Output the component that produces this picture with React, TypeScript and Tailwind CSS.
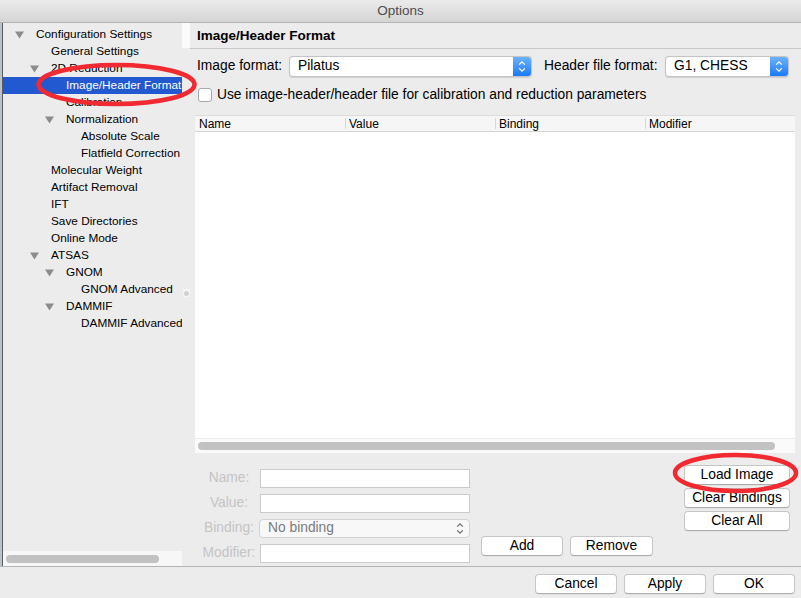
import React from 'react';

type TreeNode = { label: string; level: number; open?: boolean; selected?: boolean };

const tree: TreeNode[] = [
  { label: 'Configuration Settings', level: 0, open: true },
  { label: 'General Settings', level: 1 },
  { label: '2D Reduction', level: 1, open: true },
  { label: 'Image/Header Format', level: 2, selected: true },
  { label: 'Calibration', level: 2 },
  { label: 'Normalization', level: 2, open: true },
  { label: 'Absolute Scale', level: 3 },
  { label: 'Flatfield Correction', level: 3 },
  { label: 'Molecular Weight', level: 1 },
  { label: 'Artifact Removal', level: 1 },
  { label: 'IFT', level: 1 },
  { label: 'Save Directories', level: 1 },
  { label: 'Online Mode', level: 1 },
  { label: 'ATSAS', level: 1, open: true },
  { label: 'GNOM', level: 2, open: true },
  { label: 'GNOM Advanced', level: 3 },
  { label: 'DAMMIF', level: 2, open: true },
  { label: 'DAMMIF Advanced', level: 3 },
];

const indent = ['pl-[12px]', 'pl-[27px]', 'pl-[42px]', 'pl-[57px]'];

const Disclosure = () => (
  <svg width="9" height="8" viewBox="0 0 9 8">
    <path d="M0 0.5 L9 0.5 L4.5 7.5 Z" fill="#8c8c8c" />
  </svg>
);

const Stepper = ({ color = 'white' }: { color?: string }) => (
  <svg width="8" height="13" viewBox="0 0 8 13">
    <path d="M1.2 4.6 L4 1.8 L6.8 4.6" fill="none" stroke={color} strokeWidth="1.3" />
    <path d="M1.2 8.4 L4 11.2 L6.8 8.4" fill="none" stroke={color} strokeWidth="1.3" />
  </svg>
);

const Button = ({ children, className = '' }: { children: React.ReactNode; className?: string }) => (
  <div
    className={`flex h-[20px] items-center justify-center rounded-[4px] border border-[#c6c6c6] border-b-[#adadad] bg-white text-[13.8px] text-black shadow-[0_0.5px_0.5px_rgba(0,0,0,0.08)] ${className}`}
  >
    {children}
  </div>
);

const BlueSelect = ({ value, className }: { value: string; className: string }) => (
  <div className={`flex h-[21px] items-stretch rounded-[4px] border border-[#c4c4c4] bg-white shadow-[0_0.5px_1px_rgba(0,0,0,0.12)] ${className}`}>
    <div className="flex flex-1 items-center pl-[8px] text-black">{value}</div>
    <div className="flex w-[18px] items-center justify-center rounded-r-[3px] bg-gradient-to-b from-[#6bb2fb] to-[#1579f7]">
      <Stepper />
    </div>
  </div>
);

const columns = ['Name', 'Value', 'Binding', 'Modifier'];

export default function App() {
  return (
    <div
      className="relative h-[598px] w-[801px] overflow-hidden bg-[#ececec] text-black"
      style={{ fontFamily: '"Liberation Sans", Arial, sans-serif' }}
    >
      {/* title bar */}
      <div className="flex h-[23px] items-center justify-center border-b border-[#b3b3b3] bg-gradient-to-b from-[#ebebeb] to-[#d5d5d5] text-[13.5px] text-[#4d4d4d]">
        Options
      </div>

      <div className="flex h-[543px]">
        {/* window edge */}
        <div className="w-[2px] bg-[#b9c3cc]" />
        <div className="w-[1px] bg-[#5c5c5c]" />

        {/* tree */}
        <div className="flex w-[179px] flex-col">
          <div className="flex-1 overflow-hidden pt-[3px] text-[11.8px]">
            {tree.map((n) => (
              <div
                key={n.label}
                className={`flex h-[17px] items-center overflow-hidden whitespace-nowrap ${indent[n.level]} ${
                  n.selected ? 'bg-[#2258d0] text-white' : 'text-black'
                }`}
              >
                <div className="flex w-[21px] shrink-0 items-center">{n.open && <Disclosure />}</div>
                <span>{n.label}</span>
              </div>
            ))}
          </div>
          <div className="flex h-[15px] items-center bg-[#f7f7f7] px-[3px]">
            <div className="h-[8px] w-[153px] rounded-full bg-[#c2c2c2]" />
          </div>
        </div>

        {/* splitter gap */}
        <div className="flex w-[8px] flex-col">
          <div className="h-[25px] bg-[#fbfbfb]" />
          <div className="mt-[241px] ml-[1px] flex h-[8px] w-[7px] items-center justify-center bg-[#f6f6f6]">
            <div className="h-[5px] w-[5px] rounded-full bg-[#d2d2d2]" />
          </div>
        </div>

        {/* right pane */}
        <div className="flex flex-1 flex-col text-[13.8px]">
          <div className="flex h-[26px] items-center border-b border-[#c8c8c8] pl-[7px] pt-[2px] text-[13.5px] font-bold">
            Image/Header Format
          </div>

          <div className="mt-[7px] flex h-[21px] items-center pl-[7px]">
            <span className="w-[92px] whitespace-nowrap">Image format:</span>
            <BlueSelect value="Pilatus" className="w-[243px]" />
            <span className="ml-[12px] w-[121px] whitespace-nowrap">Header file format:</span>
            <BlueSelect value="G1, CHESS" className="w-[124px]" />
          </div>

          <div className="mt-[10px] flex h-[16px] items-center pl-[8px]">
            <div className="h-[14px] w-[14px] rounded-[3px] border border-[#a9a9a9] bg-white" />
            <span className="ml-[5px] whitespace-nowrap">Use image-header/header file for calibration and reduction parameters</span>
          </div>

          {/* table */}
          <div className="ml-[5px] mt-[12px] flex h-[338px] w-[600px] flex-col border-t border-[#dcdcdc] bg-white">
            <div className="flex h-[16px] border-b border-[#d4d4d4] bg-[#f6f6f6] text-[12px]">
              {columns.map((c, i) => (
                <div key={c} className="flex w-[150px] items-center">
                  {i > 0 && <div className="h-[11px] w-[1px] bg-[#d6d6d6]" />}
                  <span className={i > 0 ? 'ml-[3px]' : 'ml-[4px]'}>{c}</span>
                </div>
              ))}
            </div>
            <div className="flex-1" />
            <div className="flex h-[15px] items-center border-t border-[#ededed] bg-[#fafafa] px-[3px]">
              <div className="h-[8px] w-[577px] rounded-full bg-[#c2c2c2]" />
            </div>
          </div>

          {/* bottom form */}
          <div className="flex flex-1">
            <div className="ml-[10px] mt-[16px] grid grid-cols-[58px_210px] gap-x-[2px] gap-y-[3px]">
              <span className="flex h-[19px] items-center justify-center text-[#c4c4c4]">Name:</span>
              <div className="h-[19px] border border-[#cacaca] bg-white" />
              <span className="flex h-[19px] items-center justify-center text-[#c4c4c4]">Value:</span>
              <div className="h-[19px] border border-[#cacaca] bg-white" />
              <span className="flex h-[19px] items-center justify-center text-[#c4c4c4]">Binding:</span>
              <div className="-ml-[1px] flex h-[19px] items-center justify-between rounded-[4px] border border-[#d2d2d2] bg-[#f8f8f8] pl-[8px] pr-[5px] text-[#7b7b7b]">
                <span>No binding</span>
                <Stepper color="#6e6e6e" />
              </div>
              <span className="flex h-[19px] items-center justify-center text-[#c4c4c4]">Modifier:</span>
              <div className="h-[19px] border border-[#cacaca] bg-white" />
            </div>

            <div className="ml-[11px] mt-[83px] flex gap-[7px]">
              <Button className="w-[82px]">Add</Button>
              <Button className="w-[83px]">Remove</Button>
            </div>

            <div className="ml-auto mr-[11px] mt-[12px] flex flex-col gap-[3px]">
              <Button className="w-[106px]">Load Image</Button>
              <Button className="w-[106px]">Clear Bindings</Button>
              <Button className="w-[106px]">Clear All</Button>
            </div>
          </div>
        </div>
      </div>

      {/* bottom bar */}
      <div className="flex h-[32px] items-start justify-end gap-[7px] border-t border-[#b4b4b4] pr-[6px] pt-[7px]">
        <Button className="w-[82px]">Cancel</Button>
        <Button className="w-[82px]">Apply</Button>
        <Button className="w-[82px]">OK</Button>
      </div>

      {/* red annotation ellipses */}
      <svg className="pointer-events-none absolute left-0 top-0" width="801" height="598">
        <ellipse cx="116.5" cy="84.5" rx="78" ry="19.5" fill="none" stroke="#f02a30" strokeWidth="4.5" />
        <ellipse cx="735.5" cy="473" rx="60.5" ry="18" fill="none" stroke="#f02a30" strokeWidth="4.5" />
      </svg>
    </div>
  );
}
